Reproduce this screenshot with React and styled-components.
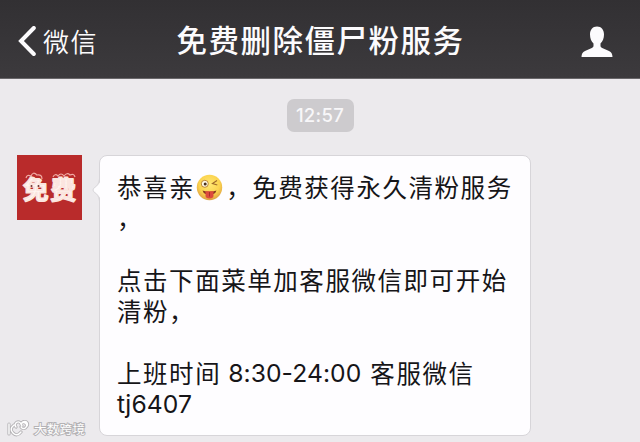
import React from "react";
import styled, { createGlobalStyle } from "styled-components";

const GlobalStyle = createGlobalStyle`
  * { box-sizing: border-box; }
  body { margin: 0; background: #eceaed; overflow: hidden; }
`;

const Screen = styled.div`
  position: relative;
  width: 640px;
  height: 442px;
  display: flex;
  flex-direction: column;
  overflow: hidden;
  background: #eceaed;
  font-family: Inter, "Noto Sans CJK SC", sans-serif;
`;

const NavBar = styled.header`
  flex: none;
  height: 79px;
  padding: 3px 27px 0 18px;
  display: grid;
  grid-template-columns: 100px 1fr 100px;
  align-items: center;
  color: #fcfbfd;
  background: linear-gradient(#323033, #3c3a3d);
  border-bottom: 1px solid #69676a;
`;

const BackButton = styled.div`
  display: flex;
  align-items: center;
  gap: 6px;
`;

const BackLabel = styled.span`
  font: 350 26px/36px "Noto Sans CJK SC", sans-serif;
  letter-spacing: 1.5px;
  white-space: nowrap;
`;

const Title = styled.h1`
  margin: 0;
  padding: 0 0 3px 10px;
  justify-self: center;
  font: 500 30.5px/40px "Noto Sans CJK SC", sans-serif;
  letter-spacing: 1.5px;
  white-space: nowrap;
`;

const ProfileIcon = styled.svg`
  justify-self: end;
  margin-top: 2px;
`;

const Chat = styled.main`
  flex: 1;
  display: flex;
  flex-direction: column;
`;

const TimeBadge = styled.time`
  align-self: center;
  margin-top: 20px;
  width: 67px;
  height: 33px;
  border-radius: 7px;
  background: #cdcbce;
  color: #f8f7f9;
  font: 500 18.5px/33px Inter, sans-serif;
  letter-spacing: 0.3px;
  text-align: center;
`;

const MessageRow = styled.div`
  display: flex;
  align-items: flex-start;
  margin-top: 23px;
  padding-left: 17px;
`;

const Avatar = styled.svg`
  flex: none;
  margin-right: 17px;
`;

const Bubble = styled.div`
  position: relative;
  width: 432px;
  height: 281px;
  padding: 15px 0 0 17px;
  border: 1px solid #d7d5d9;
  border-radius: 8px;
  background: #fefdff;
`;

const BubbleTail = styled.svg`
  position: absolute;
  left: -8px;
  top: 23px;
`;

const Line = styled.div`
  display: flex;
  align-items: center;
  height: 31px;
  color: #161518;
  font: 400 24.5px/31px "Noto Sans CJK SC", sans-serif;
  letter-spacing: 1.55px;
  white-space: pre;
`;

const Latin = styled.span`
  font-family: Inter, sans-serif;
  font-size: 24.7px;
  line-height: 29px;
  padding-top: 2px;
  letter-spacing: 0.05px;
  margin: 0 ${(p) => p.$after || "0"} 0 ${(p) => p.$before || "0"};
`;

const Emoji = styled.svg`
  flex: none;
  margin: 1px 3px 0 1px;
`;

const Watermark = styled.div`
  position: absolute;
  left: 7px;
  top: 419px;
  display: flex;
  align-items: center;
  gap: 3px;
`;

const WatermarkText = styled.span`
  font: 400 12.5px/20px "Noto Sans CJK SC", sans-serif;
  letter-spacing: 0.3px;
  color: #fff;
  -webkit-text-stroke: 2px #b5b3b6;
  paint-order: stroke fill;
`;

function WinkFace() {
  return (
    <Emoji width="27" height="27" viewBox="0 0 27 27">
      <defs>
        <radialGradient id="face" cx="50%" cy="38%" r="62%">
          <stop offset="0" stopColor="#ffe873" />
          <stop offset="0.65" stopColor="#fbd34f" />
          <stop offset="1" stopColor="#dda044" />
        </radialGradient>
      </defs>
      <circle cx="13.5" cy="13.5" r="12.7" fill="url(#face)" />
      <circle cx="8.8" cy="9.8" r="3.5" fill="#fffbe8" stroke="#b57c29" strokeWidth="0.9" />
      <circle cx="9.2" cy="10" r="1.5" fill="#49301a" />
      <path d="M21 6.500l-4.500 3 4.800 1.500" fill="none" stroke="#a06c2b" strokeWidth="1.2" />
      <path d="M6.500 16.500q7 2.500 14 0-.8 2.800-3 3.500h-8q-2.200-.7-3-3.500z" fill="#85391e" />
      <path d="M9.500 17.3h8v4.500q0 2.700-4 2.700t-4-2.700z" fill="#dc4a3d" />
      <path d="M13.5 18v4.5" stroke="#a92f2b" strokeWidth="1" />
    </Emoji>
  );
}

export default function App() {
  return (
    <>
      <GlobalStyle />
      <Screen>
        <NavBar>
          <BackButton>
            <svg width="19" height="30" viewBox="0 0 19 30">
              <path d="M15.8 2L3 15l12.8 13" fill="none" stroke="currentColor" strokeWidth="4" strokeLinecap="round" />
            </svg>
            <BackLabel>微信</BackLabel>
          </BackButton>
          <Title>免费删除僵尸粉服务</Title>
          <ProfileIcon width="32" height="32" viewBox="0 0 32 32">
            <path
              d="M16 .5C11.5.5 9 4 9 8.500c0 4 1.300 7 3.500 9v2.300c0 1-.5 1.700-1.700 2.200L4 25C1.500 26.300.6 27.800.5 31h31c-.1-3.200-1-4.700-3.500-6l-6.800-3c-1.200-.5-1.700-1.200-1.700-2.200v-2.300c2.200-2 3.500-5 3.500-9 0-4.500-2.500-8-7-8z"
              fill="currentColor"
            />
          </ProfileIcon>
        </NavBar>
        <Chat>
          <TimeBadge>12:57</TimeBadge>
          <MessageRow>
            <Avatar width="65" height="65" viewBox="0 0 65 65">
              <rect width="65" height="65" fill="#b92b2b" />
              <g fill="none" stroke="#f0aaa3" strokeWidth="1.2">
                <path d="M9 23q1-4 5-2 2-5 6-1 5-1 5 4" />
                <path d="M36 22q2-4 5-1 3-4 6 0 3-4 6-1 4-2 5 2" />
              </g>
              <text
                x="6"
                y="44"
                fontFamily="Noto Sans CJK SC, sans-serif"
                fontWeight="700"
                fontSize="25.5"
                letterSpacing="2"
                fill="#fff5f0"
                stroke="#fbe5df"
                strokeWidth="1.8"
                strokeLinejoin="round"
              >
                免费
              </text>
              <g fill="#6d3331">
                <circle cx="14.5" cy="31" r="1" />
                <circle cx="21.500" cy="31" r="1" />
              </g>
            </Avatar>
            <Bubble>
              <BubbleTail width="9" height="22" viewBox="0 0 9 22">
                <path d="M9 0C8 5 5 7 1.500 9.500Q.5 11 1.500 12.500C5 15 8 17 9 22z" fill="#fefdff" />
                <path d="M7.500 0C7 5 5 7 1.500 9.500Q.5 11 1.500 12.500C5 15 7 17 7.500 22" fill="none" stroke="#d7d5d9" />
              </BubbleTail>
              <Line>
                恭喜亲
                <WinkFace />
                ，免费获得永久清粉服务
              </Line>
              <Line>，</Line>
              <Line />
              <Line>点击下面菜单加客服微信即可开始</Line>
              <Line>清粉，</Line>
              <Line />
              <Line>
                上班时间<Latin $before="7px" $after="9px">8:30-24:00</Latin>客服微信
              </Line>
              <Line>
                <Latin>tj6407</Latin>
              </Line>
            </Bubble>
          </MessageRow>
        </Chat>
        <Watermark>
          <svg width="24" height="18" viewBox="0 0 24 18">
            <g fill="none" strokeLinecap="round">
              <path
                d="M2 4v10M7 5Q2 9 6 13q4 4 8-1M9 7a3 3 0 1 1 5-3 3 3 0 1 1 0 3M15 6a3 3 0 1 1 4 1"
                stroke="#b5b3b6"
                strokeWidth="3.200"
              />
              <path
                d="M2 4v10M7 5Q2 9 6 13q4 4 8-1M9 7a3 3 0 1 1 5-3 3 3 0 1 1 0 3M15 6a3 3 0 1 1 4 1"
                stroke="#fff"
                strokeWidth="1.400"
              />
            </g>
          </svg>
          <WatermarkText>大数跨境</WatermarkText>
        </Watermark>
      </Screen>
    </>
  );
}
